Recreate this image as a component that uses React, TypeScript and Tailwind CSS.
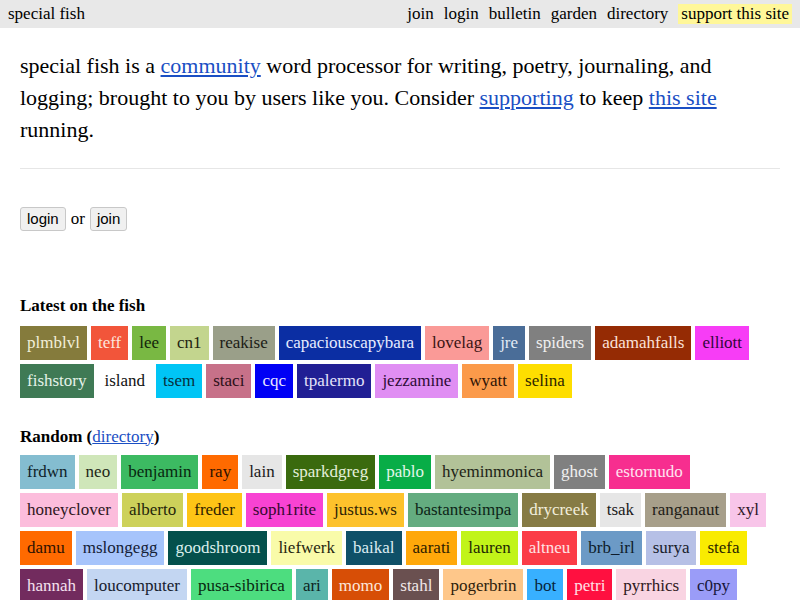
const latest: [string, string, string][] = [
  ["plmblvl", "#857b3c", "#f2efd8"],
  ["teff", "#f2553a", "#fde4dc"],
  ["lee", "#79b843", "#12240a"],
  ["cn1", "#c3d58e", "#1e2410"],
  ["reakise", "#9a9f89", "#1a1c16"],
  ["capaciouscapybara", "#0b2ea3", "#e6ebff"],
  ["lovelag", "#fa9a97", "#3a1414"],
  ["jre", "#4a6d98", "#e2ebf5"],
  ["spiders", "#808080", "#f0f0f0"],
  ["adamahfalls", "#952b04", "#fbe2d8"],
  ["elliott", "#f73df6", "#33063a"],
  ["fishstory", "#3f7a55", "#e5f3e9"],
  ["island", "#ffffff", "#111111"],
  ["tsem", "#00c5f5", "#07303c"],
  ["staci", "#c77189", "#2b0f17"],
  ["cqc", "#0000f5", "#e8e8ff"],
  ["tpalermo", "#211f94", "#e4e3fa"],
  ["jezzamine", "#e08ef3", "#2e0c36"],
  ["wyatt", "#fb9a4a", "#2e1406"],
  ["selina", "#fede00", "#2e2600"],
];

const random: [string, string, string][] = [
  ["frdwn", "#84bdd0", "#0e2229"],
  ["neo", "#cfe6b9", "#1d2616"],
  ["benjamin", "#3cba62", "#08260f"],
  ["ray", "#ff6a00", "#2e1200"],
  ["lain", "#e6e6e6", "#1a1a1a"],
  ["sparkdgreg", "#3a6a0e", "#e5f0da"],
  ["pablo", "#08ad47", "#e2f7ea"],
  ["hyeminmonica", "#b2c298", "#1e2416"],
  ["ghost", "#808080", "#f0f0f0"],
  ["estornudo", "#f72e8f", "#ffe3f0"],
  ["honeyclover", "#fcbddc", "#2e1622"],
  ["alberto", "#cdd15a", "#24260a"],
  ["freder", "#fec416", "#2e2200"],
  ["soph1rite", "#f843d3", "#360830"],
  ["justus.ws", "#fdc22c", "#2e2206"],
  ["bastantesimpa", "#64ac80", "#0d2417"],
  ["drycreek", "#867b45", "#f2eedc"],
  ["tsak", "#e6e6e6", "#1a1a1a"],
  ["ranganaut", "#a79f8a", "#1e1c17"],
  ["xyl", "#f8c5e9", "#2e1627"],
  ["damu", "#ff6a00", "#2e1200"],
  ["mslongegg", "#a6c4fb", "#142036"],
  ["goodshroom", "#04504c", "#dcf0ee"],
  ["liefwerk", "#f9fba9", "#26260f"],
  ["baikal", "#0f5068", "#dcecf2"],
  ["aarati", "#ffa80a", "#2e1c00"],
  ["lauren", "#c1f419", "#1e2804"],
  ["altneu", "#fb3c47", "#ffe2e4"],
  ["brb_irl", "#6c9ac6", "#0e1c2a"],
  ["surya", "#b6c0e6", "#181c2c"],
  ["stefa", "#f9eb01", "#2a2600"],
  ["hannah", "#722b5e", "#f5e1ef"],
  ["loucomputer", "#c3d6f2", "#16202e"],
  ["pusa-sibirica", "#4ddd7f", "#08280f"],
  ["ari", "#5ab5aa", "#0c2422"],
  ["momo", "#d74e06", "#fde6da"],
  ["stahl", "#6a5050", "#f2e8e8"],
  ["pogerbrin", "#fec78a", "#2e1e0c"],
  ["bot", "#38b0ff", "#07243a"],
  ["petri", "#ff1040", "#ffe0e6"],
  ["pyrrhics", "#f9d4e2", "#2e1820"],
  ["c0py", "#9a9cf8", "#16163a"],
];

function Tag({ name, bg, fg }: { name: string; bg: string; fg: string }) {
  return (
    <a
      href="#"
      className="block px-[7px] h-[34px] leading-[34px] text-[17px] no-underline"
      style={{ backgroundColor: bg, color: fg }}
    >
      {name}
    </a>
  );
}

function TagList({ items }: { items: [string, string, string][] }) {
  return (
    <div className="flex flex-wrap gap-x-[4px] gap-y-[4px]">
      {items.map(([n, bg, fg]) => (
        <Tag key={n} name={n} bg={bg} fg={fg} />
      ))}
    </div>
  );
}

export default function App() {
  const serif = "font-['Liberation_Serif','Times_New_Roman',serif]";
  const btn =
    "font-['Liberation_Sans',Arial,sans-serif] text-[15px] h-[24px] px-[6px] bg-[#f0f0f0] border border-[#c8c8c8] rounded-[3px]";
  return (
    <div className={`${serif} w-[800px] h-[600px] overflow-hidden bg-white text-black`}>
      {/* top bar */}
      <div className="flex items-center justify-between h-[28px] bg-[#e8e8e8] pl-[8px] pr-[8px] text-[17px]">
        <span>special fish</span>
        <nav className="flex items-center gap-[10px]">
          <a href="#">join</a>
          <a href="#">login</a>
          <a href="#">bulletin</a>
          <a href="#">garden</a>
          <a href="#">directory</a>
          <a href="#" className="bg-[#fff799] px-[3px] leading-[20px]">support this site</a>
        </nav>
      </div>

      <div className="px-[20px]">
        <p className="mt-[22px] text-[22px] leading-[32px]">
          special fish is a{" "}
          <a href="#" className="text-[#1a4fc4] underline">community</a> word
          processor for writing, poetry, journaling, and logging; brought to you by
          users like you. Consider{" "}
          <a href="#" className="text-[#1a4fc4] underline">supporting</a> to keep{" "}
          <a href="#" className="text-[#1a4fc4] underline">this site</a> running.
        </p>

        <hr className="mt-[22px] border-0 border-t border-[#e6e6e6]" />

        <div className="mt-[37px] flex items-center gap-[5px] text-[17px]">
          <button className={btn}>login</button>
          <span>or</span>
          <button className={btn}>join</button>
        </div>

        <h2 className="mt-[65px] mb-[11px] text-[17px] font-bold leading-[18px]">
          Latest on the fish
        </h2>
        <TagList items={latest} />

        <h2 className="mt-[30px] mb-[9px] text-[17px] font-bold leading-[18px]">
          Random (<a href="#" className="font-normal text-[#1a4fc4] underline">directory</a>)
        </h2>
        <TagList items={random} />
      </div>
    </div>
  );
}
